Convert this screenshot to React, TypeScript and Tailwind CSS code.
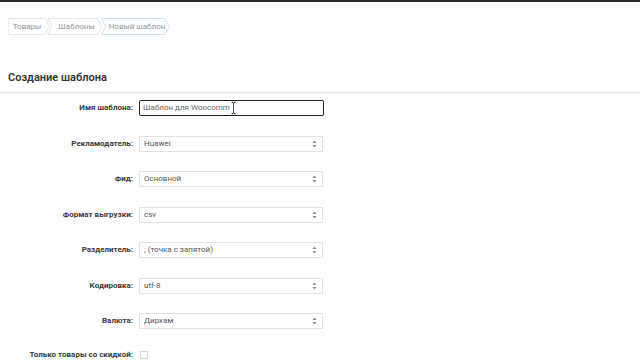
const font = { fontFamily: 'Roboto, "Liberation Sans", sans-serif' };

function Crumb({ label, width, first, active }: { label: string; width: string; first?: boolean; active?: boolean }) {
  return (
    <div className={`relative flex h-[17px] items-center justify-center ${width} ${first ? 'pr-[3px]' : '-ml-[1px] pl-[3px]'}`}>
      <svg className="absolute inset-0 h-full w-full" viewBox="0 0 100 17" preserveAspectRatio="none">
        <polygon
          points={first ? '2,0.5 92,0.5 99.5,8.5 92,16.5 2,16.5 0.5,15 0.5,2' : '0.5,0.5 92,0.5 99.5,8.5 92,16.5 0.5,16.5 7,8.5'}
          fill="white"
          stroke={active ? '#cfe0ea' : '#e3e6e8'}
          strokeWidth="1"
          vectorEffect="non-scaling-stroke"
        />
      </svg>
      <span className="relative text-[8px] text-[#90959a]">{label}</span>
    </div>
  );
}

function Arrows() {
  return (
    <svg width="5" height="8" viewBox="0 0 5 8" className="shrink-0">
      <polygon points="2.5,0.5 4.5,3 0.5,3" fill="#8a8a8a" />
      <polygon points="2.5,7.5 4.5,5 0.5,5" fill="#8a8a8a" />
    </svg>
  );
}

function SelectBox({ value }: { value: string }) {
  return (
    <div className="flex h-[16px] w-[184px] items-center justify-between border border-[#e2e2e2] bg-white pl-[4px] pr-[5px]">
      <span className="text-[8px] text-[#555]">{value}</span>
      <Arrows />
    </div>
  );
}

const rows = [
  { label: 'Рекламодатель:', value: 'Huawei' },
  { label: 'Фид:', value: 'Основной' },
  { label: 'Формат выгрузки:', value: 'csv' },
  { label: 'Разделитель:', value: '; (точка с запятой)' },
  { label: 'Кодировка:', value: 'utf-8' },
  { label: 'Валюта:', value: 'Дирхам' },
];

export default function App() {
  return (
    <div className="h-[360px] w-[640px] overflow-hidden bg-white" style={font}>
      <div className="h-[2px] bg-[#2a2a2a]" />

      <div className="flex pl-[8px] pt-[16px]">
        <Crumb label="Товары" width="w-[41px]" first />
        <Crumb label="Шаблоны" width="w-[54px]" />
        <Crumb label="Новый шаблон" width="w-[69px]" active />
      </div>

      <h1 className="pl-[8px] pt-[36px] text-[11px] font-semibold leading-[14px] text-[#333]">Создание шаблона</h1>
      <div className="mt-[7px] h-px bg-[#e6e6e6]" />

      <div className="flex flex-col gap-[19.5px] pt-[7px]">
        <div className="flex items-center">
          <div className="w-[133px] text-right text-[8px] font-bold text-[#3a3a3a]">Имя шаблона:</div>
          <div className="relative ml-[6px] flex h-[16px] w-[185px] items-center rounded-[2px] border-[1.5px] border-[#222] pl-[3px]">
            <span className="text-[8px] text-[#666]">Шаблон для Woocomm</span>
            <svg className="absolute left-[91px] top-[1px]" width="5" height="12" viewBox="0 0 5 12">
              <path d="M0.5 0.5h1.5l0.5 0.5 0.5-0.5h1.5M2.5 1v10M0.5 11.5h1.5l0.5-0.5 0.5 0.5h1.5" fill="none" stroke="#333" strokeWidth="0.9" />
            </svg>
          </div>
        </div>

        {rows.map((r) => (
          <div key={r.label} className="flex items-center">
            <div className="w-[133px] text-right text-[8px] font-bold text-[#3a3a3a]">{r.label}</div>
            <div className="ml-[6px]">
              <SelectBox value={r.value} />
            </div>
          </div>
        ))}

        <div className="flex items-center">
          <div className="w-[133px] text-right text-[8px] font-bold text-[#3a3a3a]">Только товары со скидкой:</div>
          <div className="ml-[7px] h-[8px] w-[8px] rounded-[1px] border border-[#cfcfcf] bg-white" />
        </div>
      </div>

      <div className="mt-[2px] h-px bg-[#e6e6e6]" />
    </div>
  );
}
